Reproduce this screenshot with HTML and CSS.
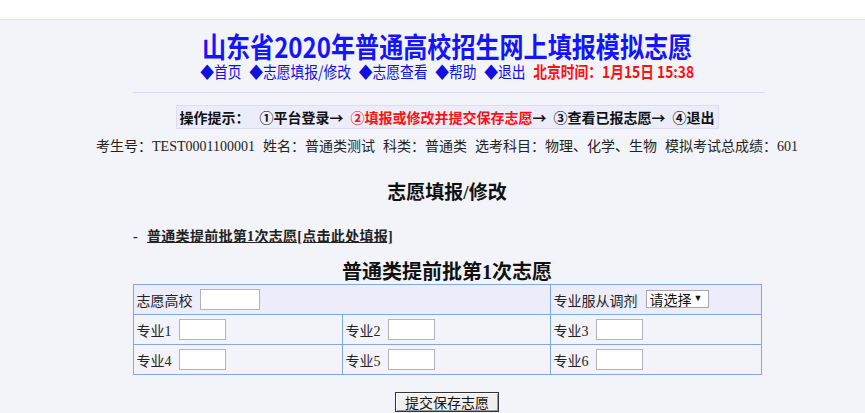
FILE: index.html
```html
<!DOCTYPE html>
<html lang="zh-CN">
<head>
<meta charset="utf-8">
<title>山东省2020年普通高校招生网上填报模拟志愿</title>
<link rel="stylesheet" href="styles.css">
</head>
<body>
<div class="topbar"></div>
<div class="page">
  <div class="wrap">
    <h1 class="title">山东省2020年普通高校招生网上填报模拟志愿</h1>
    <div class="nav">
      <a class="nav-item" href="#">◆首页</a>
      <a class="nav-item" href="#">◆志愿填报/修改</a>
      <a class="nav-item" href="#">◆志愿查看</a>
      <a class="nav-item" href="#">◆帮助</a>
      <a class="nav-item" href="#">◆退出</a>
      <span class="time">北京时间：1月15日 15:38</span>
    </div>
    <div class="rule"></div>
    <div class="tips">
      <span class="tips-label">操作提示：</span>
      <span class="step">①平台登录→</span>
      <span class="step step-active">②填报或修改并提交保存志愿<span class="arrow">→</span></span>
      <span class="step">③查看已报志愿→</span>
      <span class="step">④退出</span>
    </div>
    <div class="info">
      <span class="info-item">考生号：TEST0001100001</span>
      <span class="info-item">姓名：普通类测试</span>
      <span class="info-item">科类：普通类</span>
      <span class="info-item">选考科目：物理、化学、生物</span>
      <span class="info-item">模拟考试总成绩：601</span>
    </div>
    <h2 class="section">志愿填报/修改</h2>
    <div class="linkrow"><span class="dash">-</span><a class="fill-link" href="#">普通类提前批第1次志愿[点击此处填报]</a></div>
    <div class="caption">普通类提前批第1次志愿</div>
    <table class="form">
      <colgroup>
        <col class="c1"><col class="c2"><col class="c3">
      </colgroup>
      <tr class="head-row">
        <td colspan="2"><div class="cell"><span>志愿高校</span><input class="inp inp-wide" type="text"></div></td>
        <td><div class="cell"><span>专业服从调剂</span><span class="sel"><select class="select"><option>请选择</option><option>服从</option><option>不服从</option></select></span></div></td>
      </tr>
      <tr>
        <td><div class="cell"><span>专业1</span><input class="inp" type="text"></div></td>
        <td><div class="cell"><span>专业2</span><input class="inp" type="text"></div></td>
        <td><div class="cell"><span>专业3</span><input class="inp" type="text"></div></td>
      </tr>
      <tr>
        <td><div class="cell"><span>专业4</span><input class="inp" type="text"></div></td>
        <td><div class="cell"><span>专业5</span><input class="inp" type="text"></div></td>
        <td><div class="cell"><span>专业6</span><input class="inp" type="text"></div></td>
      </tr>
    </table>
    <div class="actions"><button class="submit" type="button">提交保存志愿</button></div>
  </div>
</div>
</body>
</html>
```

FILE: styles.css
```css
html, body {
  margin: 0;
  padding: 0;
  background: #f3f4f9;
  font-family: "Noto Sans CJK SC", sans-serif;
  color: #222;
}

.topbar {
  height: 19px;
  background: #ffffff;
  border-bottom: 1px solid #e4e4e8;
}

.page {
  background: #f3f4f9;
  min-height: 393px;
}

.wrap {
  width: 628px;
  margin-left: 133px;
  display: flex;
  flex-direction: column;
  align-items: center;
}

.title {
  margin: 11px 0 0;
  font-size: 28px;
  line-height: 30px;
  font-weight: bold;
  color: #1414ff;
  white-space: nowrap;
  transform: scaleX(0.86);
}

.nav {
  display: flex;
  gap: 9px;
  font-size: 16px;
  line-height: 20px;
  white-space: nowrap;
  transform: scaleX(0.86);
}

.nav-item {
  color: #1010e0;
  text-decoration: none;
}

.time {
  color: #ff1010;
  font-weight: bold;
}

.rule {
  align-self: stretch;
  margin: 11px -4px 0 0;
  height: 1px;
  background: #dadaf6;
}

.tips {
  margin-top: 12px;
  display: flex;
  gap: 7px;
  padding: 0 3px;
  height: 22px;
  align-items: center;
  border: 1px solid #dcdcf4;
  background: #ecedfb;
  font-size: 14px;
  font-weight: bold;
  color: #111;
  white-space: nowrap;
}

.tips-label {
  margin-right: 3px;
}

.step-active {
  color: #ff1010;
}

.arrow {
  color: #111;
}

.info {
  margin-top: 8px;
  display: flex;
  gap: 8px;
  font-family: "Liberation Serif", "Noto Sans CJK SC", serif;
  font-size: 14px;
  line-height: 20px;
  color: #222;
  white-space: nowrap;
}

.section {
  margin: 24px 0 0;
  font-family: "Liberation Serif", "Noto Sans CJK SC", serif;
  font-size: 19px;
  line-height: 24px;
  font-weight: bold;
  color: #111;
}

.linkrow {
  align-self: stretch;
  margin-top: 22px;
  font-family: "Liberation Serif", "Noto Sans CJK SC", serif;
  font-size: 14px;
  line-height: 20px;
  font-weight: bold;
  color: #222;
  white-space: nowrap;
}

.dash {
  display: inline-block;
  width: 14px;
}

.fill-link {
  color: #222;
  text-decoration: underline;
  letter-spacing: 0.3px;
}

.caption {
  margin-top: 13px;
  font-family: "Liberation Serif", "Noto Sans CJK SC", serif;
  font-size: 20px;
  line-height: 24px;
  font-weight: bold;
  color: #111;
}

.form {
  width: 628px;
  table-layout: fixed;
  border-collapse: collapse;
  border: 1px solid #7fa9e0;
  font-family: "Liberation Serif", "Noto Sans CJK SC", serif;
  font-size: 14px;
  color: #222;
}

.c1 { width: 209px; }
.c2 { width: 208px; }
.c3 { width: 211px; }

.form td {
  border: 1px solid #7fa9e0;
  height: 29px;
  padding: 0 0 0 3px;
}

.head-row td {
  background: #ececfb;
}

.cell {
  display: flex;
  align-items: center;
  gap: 7px;
  white-space: nowrap;
}

.inp {
  box-sizing: border-box;
  width: 47px;
  height: 21px;
  margin: 0;
  padding: 0 2px;
  border: 1px solid #b4b4b4;
  background: #ffffff;
  font-size: 13px;
}

.inp-wide {
  width: 60px;
}

.sel {
  position: relative;
  display: inline-block;
  margin-left: 1px;
}

.sel::after {
  content: "▼";
  position: absolute;
  right: 6px;
  top: 3px;
  font-size: 9px;
  line-height: 11px;
  color: #111;
  pointer-events: none;
}

.select {
  appearance: none;
  -webkit-appearance: none;
  box-sizing: border-box;
  width: 63px;
  height: 18px;
  margin: 0;
  padding: 0 0 0 3px;
  border: 1px solid #a8a8a8;
  border-radius: 0;
  background: #ffffff;
  font-family: "Noto Sans CJK SC", sans-serif;
  font-size: 14px;
  line-height: 16px;
  color: #111;
}

.actions {
  margin-top: 14px;
}

.submit {
  box-sizing: border-box;
  height: 20px;
  width: 104px;
  padding: 0;
  margin: 0;
  border: 1px solid #333;
  border-radius: 0;
  background: #f0f0f0;
  box-shadow: inset 1px 1px 0 #ffffff, inset -1px -1px 0 #9a9a9a;
  font-family: "Noto Sans CJK SC", sans-serif;
  font-size: 14px;
  line-height: 16px;
  color: #111;
}
```
